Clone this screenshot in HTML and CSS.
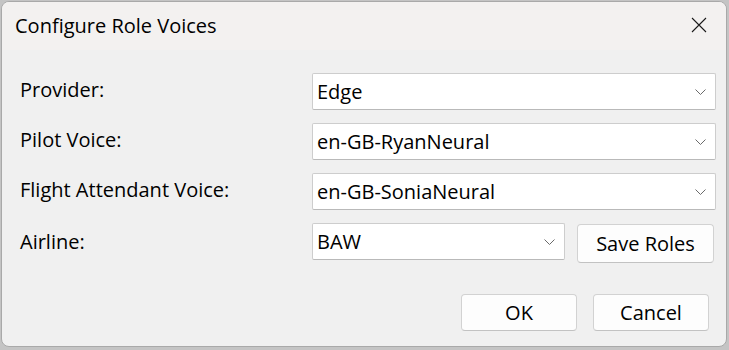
FILE: index.html
```html
<!DOCTYPE html>
<html lang="en">
<head>
    <meta charset="UTF-8">
    <meta name="viewport" content="width=device-width, initial-scale=1.0">
    <title>Configure Role Voices</title>
    <link rel="stylesheet" href="styles.css">
</head>
<body>
    <div class="dialog">
        <div class="titlebar">
            <span class="title">Configure Role Voices</span>
            <span class="close">
                <svg width="16" height="16" viewBox="0 0 16 16">
                    <path d="M1 1 L15 15 M15 1 L1 15" stroke="#1a1a1a" stroke-width="1.1" fill="none"/>
                </svg>
            </span>
        </div>

        <div class="content">
            <div class="form">
                <label>Provider:</label>
                <div class="combo">
                    <span>Edge</span>
                    <svg class="chevron" width="11" height="6" viewBox="0 0 11 6"><path d="M0.5 0.5 L5.5 5.5 L10.5 0.5" /></svg>
                </div>

                <label>Pilot Voice:</label>
                <div class="combo">
                    <span>en-GB-RyanNeural</span>
                    <svg class="chevron" width="11" height="6" viewBox="0 0 11 6"><path d="M0.5 0.5 L5.5 5.5 L10.5 0.5" /></svg>
                </div>

                <label>Flight Attendant Voice:</label>
                <div class="combo">
                    <span>en-GB-SoniaNeural</span>
                    <svg class="chevron" width="11" height="6" viewBox="0 0 11 6"><path d="M0.5 0.5 L5.5 5.5 L10.5 0.5" /></svg>
                </div>

                <label>Airline:</label>
                <div class="airline-row">
                    <div class="combo combo-short">
                        <span>BAW</span>
                        <svg class="chevron" width="11" height="6" viewBox="0 0 11 6"><path d="M0.5 0.5 L5.5 5.5 L10.5 0.5" /></svg>
                    </div>
                    <button class="btn btn-save">Save Roles</button>
                </div>
            </div>

            <div class="actions">
                <button class="btn btn-action">OK</button>
                <button class="btn btn-action">Cancel</button>
            </div>
        </div>
    </div>
</body>
</html>
```

FILE: styles.css
```css
* {
    box-sizing: border-box;
}

body {
    margin: 0;
    padding: 0;
    background-color: #c4c4c4;
    font-family: "Open Sans", "Noto Sans", sans-serif;
    color: #000000;
}

.dialog {
    width: 726px;
    height: 346px;
    margin: 1px 0 0 1px;
    border: 1px solid #a9a9a9;
    border-radius: 8px;
    background-color: #f0f0f0;
    overflow: hidden;
}

.titlebar {
    height: 48px;
    display: flex;
    align-items: center;
    justify-content: space-between;
    background-color: #f3f1f0;
    padding: 0 19px 0 13px;
}

.title {
    font-size: 20px;
    margin-top: -2px;
}

.close {
    display: flex;
    margin-top: -2px;
}

.content {
    padding: 23px 10px 0 18px;
}

.form {
    display: grid;
    grid-template-columns: 292px 404px;
    row-gap: 13px;
    align-items: center;
}

label {
    font-size: 20px;
    margin-top: -4px;
}

.combo {
    height: 37px;
    display: flex;
    align-items: center;
    justify-content: space-between;
    padding: 0 9px 0 4px;
    background-color: #ffffff;
    border: 1px solid #cdcdcd;
    border-bottom-color: #b9b9b9;
    border-radius: 2px;
    font-size: 20px;
}

.chevron path {
    stroke: #6a6a6a;
    stroke-width: 1;
    fill: none;
}

.airline-row {
    display: flex;
    align-items: flex-start;
    gap: 12px;
}

.combo-short {
    width: 253px;
}

.btn {
    font-family: "Open Sans", "Noto Sans", sans-serif;
    font-size: 20px;
    background-color: #fdfdfd;
    border: 1px solid #d2d2d2;
    border-bottom-color: #c2c2c2;
    border-radius: 4px;
    color: #000000;
    padding: 0;
}

.btn-save {
    width: 137px;
    height: 39px;
    margin-top: 1px;
}

.actions {
    display: flex;
    justify-content: flex-end;
    gap: 16px;
    margin-top: 31px;
    padding-right: 7px;
}

.btn-action {
    width: 116px;
    height: 37px;
}
```
